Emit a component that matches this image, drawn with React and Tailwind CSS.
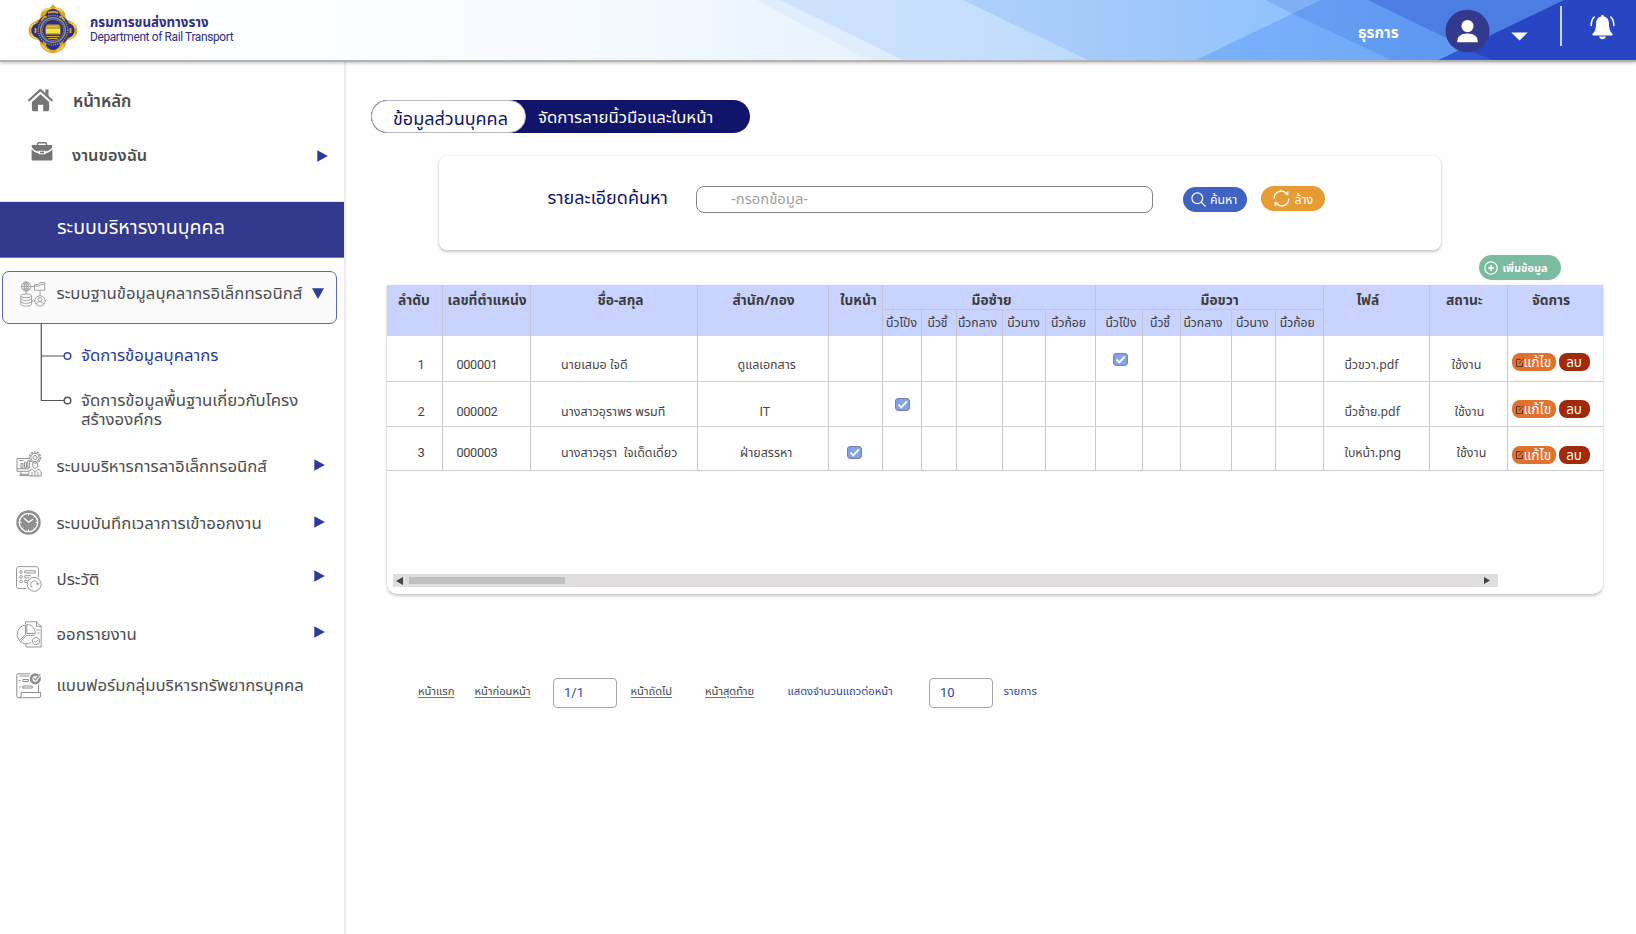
import React from "react";

function Logo() {
  const petals = [[25, 12.5], [25, 38.5], [11, 26.5], [39, 26.5]];
  return (
    <svg className="h-[50px] w-[50px] shrink-0" viewBox="0 0 50 50">
      <path d="M25 0.3l3.300 3.500c6 .2 9.800 4 9.200 9.700 1.200 1.800 2.600 2.700 4.500 3.500 4.500 1.800 7.300 4.800 7.400 9.500.1 5-3.500 8.500-8.200 9-2 .6-3 1.800-3.400 4-.9 5.300-5.300 8.300-12.800 9.800-7.500-1.500-11.900-4.500-12.800-9.800-.4-2.200-1.400-3.400-3.400-4C4.100 35 .5 31.500.6 26.500.7 21.800 3.500 18.800 8 17c1.900-.8 3.300-1.700 4.500-3.500C11.900 7.800 15.700 4 21.700 3.800z" fill="#dca52c" />
      <path d="M15 7.500q4-3.500 8-2.800M27 4.700q4-.7 8 2.800M2.500 24q1.500-4 5-5M47.500 24q-1.500-4-5-5M3 30q1.500 4 5.500 4M47 30q-1.500 4-5.500 4M14.500 41q2 4.500 7 5.500M35.500 41q-2 4.500-7 5.500" fill="none" stroke="#f8d75c" strokeWidth="1.300" />
      {petals.map(([x, y]) => (
        <circle key={x + "-" + y} cx={x} cy={y} r="7.600" fill="#2d3088" />
      ))}
      <circle cx="25" cy="26" r="17" fill="#2d3088" />
      <path d="M13.500 16.500l3-4 2 1M36.500 16.500l-3-4-2 1M7.500 24v5M42.500 24v5M15 38l3 3M35 38l-3 3M20 8.800q5-2 10 0" fill="none" stroke="#dca52c" strokeWidth="1.800" />
      <circle cx="25" cy="26" r="14.700" fill="none" stroke="#a98a52" strokeWidth="1.600" strokeDasharray="1.200 1" />
      <circle cx="25" cy="26" r="12.300" fill="#2d3088" stroke="#6f9d9c" strokeWidth="1.500" />
      <circle cx="25" cy="26" r="10.500" fill="none" stroke="#d9803a" strokeWidth="1" strokeDasharray="1.500 .6" />
      <path d="M19 20.500h12l1.500 2.500v7.500H17.500V23z" fill="#c8a531" />
      <path d="M18 25h14v4H18z" fill="#f1e840" />
      <path d="M19.500 22.500h11M18.500 32.500h13M20.500 34.500h9" stroke="#e6bd3d" strokeWidth=".9" />
    </svg>
  );
}

function HomeIcon() {
  return (
    <svg className="h-[24px] w-[25px]" viewBox="0 0 25 24" fill="#757575">
      <path d="M12.500 6.200l8.600 7.700v7.600c0 1-.7 1.700-1.700 1.700h-4.200v-6.400H10v6.400H5.600c-1 0-1.700-.7-1.700-1.700v-7.600z" />
      <path d="M1.200 12.300L12.300 2l11.400 10.300" fill="none" stroke="#757575" strokeWidth="2.200" strokeLinecap="round" strokeLinejoin="round" />
      <path d="M17.300 1.500h3.200v6.700l-3.200-2.900z" />
    </svg>
  );
}

function BriefcaseIcon() {
  return (
    <svg className="h-[19px] w-[22px]" viewBox="0 0 22 19" fill="#757575">
      <path d="M6.500 3.200V1.800Q6.500.7 7.600.7h6.800q1.100 0 1.100 1.100v1.400" fill="none" stroke="#757575" strokeWidth="1.400" />
      <path d="M.8 3h20.400v2.200c-1.700 2.600-4 3.900-6.700 4.300v-.8H7.600v.8C4.800 9.100 2.500 7.800.8 5.200z" />
      <path d="M.6 7.200c1.900 2.200 4.200 3.500 7 4v1h6.900v-1c2.800-.5 5.100-1.800 6.900-4v10c0 .8-.5 1.300-1.300 1.300H1.900c-.8 0-1.300-.5-1.300-1.300z" />
      <rect x="9" y="9.600" width="4" height="1.600" />
    </svg>
  );
}

function NetworkIcon() {
  return (
    <svg className="h-[26px] w-[26px]" viewBox="0 0 26 26" fill="none" stroke="#9a9a9a" strokeWidth=".9">
      <circle cx="6.200" cy="5.500" r="4.600" />
      <ellipse cx="6.200" cy="5.500" rx="2" ry="4.600" />
      <path d="M1.600 5.500h9.200M6.200.9v9.200M2.500 3h7.400M2.500 8h7.400M11 5.500h3M6.200 10v3M20 9.500v5.300M12 20h3" />
      <path d="M14.500 9.200V3.500h4l1.300-2h5v7.700zM14.500 5h5l1-1.500h4.200" />
      <ellipse cx="6.200" cy="14.800" rx="5.400" ry="1.900" />
      <path d="M.8 14.800v8.400c0 1 2.400 1.900 5.400 1.900s5.400-.9 5.400-1.900v-8.400M.8 17.600c0 1 2.400 1.900 5.400 1.900s5.400-.9 5.400-1.900M.8 20.400c0 1 2.400 1.900 5.400 1.900s5.400-.9 5.400-1.900" />
      <circle cx="20" cy="20" r="5.200" />
      <circle cx="20" cy="18.600" r="2" />
      <path d="M16.300 23.500c.4-1.900 1.800-2.900 3.700-2.900s3.300 1 3.700 2.900" />
    </svg>
  );
}

function LeaveIcon() {
  return (
    <svg className="h-[26px] w-[26px]" viewBox="0 0 26 26" fill="none" stroke="#949494" strokeWidth="1">
      <path d="M14 7.500H1v12.800h12M1 17.800h12M5 20.500v3M3.500 24.500h9M3.500 23.300h9" />
      <path d="M3.500 9.500h4M5 12.500v4.300h2v-4.300zM8.500 11.300v5.500h2v-5.500zM11.800 9.700v7h1.800V9.700z" />
      <circle cx="19" cy="6.500" r="5.500" strokeDasharray="2 1" strokeWidth="1.500" />
      <circle cx="19" cy="6.500" r="4.200" />
      <circle cx="19" cy="6.500" r="2" />
      <path d="M16.800 12.200v2.500c0 1.600 1 2.600 2.300 2.600s2.300-1 2.300-2.600v-2.500" />
      <path d="M12.800 25v-3.500c0-1.800 1.400-2.700 3.700-3.200l2.600 3 2.600-3c2.300.5 3.500 1.400 3.500 3.200V25zM16 21v4M22 21v4M19.100 21.500V25" />
    </svg>
  );
}

function ClockIcon() {
  return (
    <svg className="h-[25px] w-[25px]" viewBox="0 0 25 25">
      <circle cx="12.500" cy="12.500" r="12.200" fill="#8f8f8f" />
      <circle cx="12.500" cy="12.500" r="9.200" fill="#8f8f8f" stroke="#fff" strokeWidth="1.300" />
      <path d="M12.500 3.500v2M12.500 19.500v2M3.500 12.500h2M19.500 12.500h2M6.200 6.200l1.200 1.200M18.800 6.200l-1.200 1.200M6.200 18.800l1.200-1.200M18.800 18.800l-1.200-1.200" stroke="#fff" strokeWidth="1" />
      <path d="M8 8.300l4.600 4 4.400-3" fill="none" stroke="#fff" strokeWidth="1.300" />
    </svg>
  );
}

function HistoryIcon() {
  return (
    <svg className="h-[26px] w-[26px]" viewBox="0 0 26 26" fill="none" stroke="#8f8f8f" strokeWidth=".9">
      <path d="M10.500 22.500H3c-1.500 0-2.500-1-2.500-2.500V3C.5 1.500 1.500.6 3 .6h17c1.500 0 2.500.9 2.500 2.400v8" />
      <circle cx="5" cy="6" r="1.300" />
      <circle cx="5" cy="10.800" r="1.300" />
      <circle cx="5" cy="15.500" r="1.300" />
      <path d="M8.800 4.800h10.400v2.200H8.800zM15 9.700H8.800v2.200h4.500M11.500 14.500H8.800v2h2.500" />
      <circle cx="18.200" cy="18.300" r="7" />
      <path d="M15 20.300c-1-2.500.6-5.300 3.200-5.300 2 0 3.300 1.300 3.500 3.300M20 17.500l1.800 1.500 1.400-2M15 20.300l1.500.9" />
    </svg>
  );
}

function ReportIcon() {
  return (
    <svg className="h-[27px] w-[26px]" viewBox="0 0 26 27" fill="none" stroke="#8f8f8f" strokeWidth=".9">
      <path d="M9.500 4A9.600 9.600 0 0 0 3.300 19.600L9.500 13.500z" />
      <path d="M10.800 3.500v9h8.500c0-5-3.500-9-8.500-9z" />
      <path d="M4.500 20.700A9.300 9.300 0 0 0 15 21.500M10.500 14.300l-6 6.400M10.500 14.300h8.300" />
      <path d="M9.500 3.300V.8h11l4.700 4.500V26H10v-3.300M20.500.8v4.500h4.700M20.500 9h3M21.500 12h2" />
      <circle cx="20" cy="20" r="3.600" />
      <path d="M18.300 20l1.300 1.300 2.300-2.400" />
    </svg>
  );
}

function FormIcon() {
  return (
    <svg className="h-[26px] w-[26px]" viewBox="0 0 26 26" fill="none" stroke="#8f8f8f" strokeWidth="1">
      <path d="M14 .8H2.200Q.8.800.8 2.200v20.600q0 1.900 2 1.900h20q1.800 0 1.800-1.700v-3.500H5.200v3.200q0 2-2.200 2M22.500 11.500v8M3.500 3h9.500" />
      <path d="M6.800 6.500h5.500v2H6.800zM6.800 13h9.500v2H6.800zM3 7.500h1.500M3 14h1.500" />
      <circle cx="19.300" cy="5.800" r="4.200" strokeWidth="2.800" />
      <path d="M17.300 6.200l1.900 1.600L25 1" stroke="#fff" strokeWidth="2.200" />
      <path d="M17.500 5.200l1.800 1.800 5-5.700" strokeWidth="1.200" />
    </svg>
  );
}

function Arrow() {
  return (
    <svg className="h-[12px] w-[11px]" viewBox="0 0 11 12">
      <path d="M.3.2L10.800 6 .3 11.800z" fill="#2b3a9b" />
    </svg>
  );
}

function Header() {
  return (
    <header className="relative z-10 flex h-[62px] border-b-2 border-[#b3b3b3] shadow-[0_1px_3px_rgba(0,0,0,0.25)]">
      <svg className="absolute inset-0 h-[60px] w-[1636px]" viewBox="0 0 1636 60" preserveAspectRatio="none">
        <defs>
          <linearGradient id="hbase" x1="0" x2="1636" gradientUnits="userSpaceOnUse">
            <stop offset="0" stopColor="#ffffff" />
            <stop offset=".2" stopColor="#fdfeff" />
            <stop offset=".35" stopColor="#f6faff" />
            <stop offset=".5" stopColor="#e9f4ff" />
            <stop offset=".56" stopColor="#e6f2fe" />
          </linearGradient>
          <linearGradient id="hpale" x1="780" x2="1090" gradientUnits="userSpaceOnUse">
            <stop offset="0" stopColor="#cfe2fd" />
            <stop offset=".6" stopColor="#c7dffd" />
            <stop offset="1" stopColor="#badafc" />
          </linearGradient>
          <linearGradient id="hsky" x1="963" x2="1300" gradientUnits="userSpaceOnUse">
            <stop offset="0" stopColor="#aed0fb" />
            <stop offset=".4" stopColor="#a5cafa" />
            <stop offset="1" stopColor="#90c2fd" />
          </linearGradient>
          <linearGradient id="hmid" x1="1196" x2="1500" gradientUnits="userSpaceOnUse">
            <stop offset="0" stopColor="#7ab1fa" />
            <stop offset="1" stopColor="#6ba5f6" />
          </linearGradient>
          <linearGradient id="hstrong" x1="1265" x2="1492" gradientUnits="userSpaceOnUse">
            <stop offset="0" stopColor="#679ff1" />
            <stop offset="1" stopColor="#5c96f2" />
          </linearGradient>
        </defs>
        <rect width="1636" height="60" fill="url(#hbase)" />
        <path d="M757 0H1636V60H868z" fill="#dfedfd" />
        <path d="M780 0H1636V60H903z" fill="url(#hpale)" />
        <path d="M963 0H1636V60H1088z" fill="url(#hsky)" />
        <path d="M1265 0H1321L1292 13.500z" fill="#7fb0f5" />
        <path d="M1321 0H1636V60H1196z" fill="url(#hmid)" />
        <path d="M1321 0H1636V60H1391L1292 13.500z" fill="url(#hstrong)" />
        <path d="M1368 0H1636V60H1492z" fill="#4b7de2" />
        <path d="M1564 0H1636V60H1439z" fill="#2845c4" />
        <path d="M1464 48L1492 60H1439z" fill="#3159d4" />
      </svg>
      <div className="relative flex w-full">
        <div className="ml-[28px] mt-[4px]"><Logo /></div>
        <div className="ml-[12px] mt-[14px] text-[#2b2f86]">
          <div className="h-[16px] text-[13.250px] font-bold leading-[17px] whitespace-nowrap">กรมการขนส่งทางราง</div>
          <div className="font-[Roboto] text-[11.900px] leading-[14px] tracking-[-0.35px] whitespace-nowrap">Department of Rail Transport</div>
        </div>
        <div className="ml-auto mt-[22px] w-[87px] text-[15.300px] font-bold leading-[21px] text-white">ธุรการ</div>
        <svg className="mt-[9px] h-[44px] w-[45px]" viewBox="0 0 46 44">
          <ellipse cx="23" cy="22" rx="22.500" ry="21.800" fill="#333a8e" />
          <ellipse cx="23" cy="17" rx="6.200" ry="6.200" fill="#fff" />
          <path d="M12.500 33.500c0-6 3.500-8.900 10.500-8.900s10.500 2.900 10.500 8.900z" fill="#fff" />
        </svg>
        <svg className="ml-[21px] mt-[32px] h-[9px] w-[17px]" viewBox="0 0 17 9"><path d="M.3.5h16.400L8.500 8.500z" fill="#fff" /></svg>
        <div className="ml-[32px] mt-[6px] h-[40px] w-[2px] bg-[#c9d4f8]" />
        <svg className="ml-[28px] mr-[21px] mt-[14px] h-[26px] w-[25px]" viewBox="0 0 25 26" fill="#fff">
          <path d="M12.500 1c.9 0 1.400.6 1.400 1.500 3.200.7 5 3.100 5 6.500 0 5 .8 8.200 3.300 10.600.9.900.5 2-.7 2h-18c-1.200 0-1.600-1.100-.7-2C5.300 17.200 6.100 14 6.100 9c0-3.400 1.800-5.800 5-6.500 0-.9.500-1.500 1.400-1.500zM9.200 22.500h6.600c-.3 1.700-1.500 2.800-3.300 2.800s-3-1.100-3.300-2.800z" />
          <path d="M4.200 3C2 5.200 1.200 8 1.200 11.500M20.800 3c2.200 2.200 3 5 3 8.500" fill="none" stroke="#fff" strokeWidth="1.600" strokeLinecap="round" />
        </svg>
      </div>
    </header>
  );
}

function MenuRow({ icon, label, arrow, className, textClass, arrowClass }) {
  return (
    <div className={"flex items-start pl-[16px] " + className}>
      <div className="w-[40.500px] shrink-0">{icon}</div>
      <div className={"w-[257.500px] shrink-0 text-[16.750px] leading-[24px] whitespace-nowrap " + textClass}>{label}</div>
      {arrow && <div className={arrowClass}><Arrow /></div>}
    </div>
  );
}

function Sidebar() {
  return (
    <aside className="flex w-[346px] shrink-0 flex-col border-r-2 border-[#ededed] text-[#4f4f4f]">
      <div className="mt-[26px] flex h-[54px] items-start pl-[28px]">
        <HomeIcon />
        <div className="ml-[20px] mt-[1px] text-[16.800px] font-semibold leading-[24px]">หน้าหลัก</div>
      </div>
      <div className="flex h-[59px] items-start pl-[31px]">
        <BriefcaseIcon />
        <div className="ml-[19px] mt-[1px] w-[245px] text-[16.400px] font-semibold leading-[24px]">งานของฉัน</div>
        <div className="mt-[7.500px]"><Arrow /></div>
      </div>
      <div className="h-[57px] w-[344px] border-b border-t border-b-[#6d72b8] border-t-[#e4e4ee] bg-[#333a8e] pl-[57px] pt-[11px] text-[19.600px] leading-[28px] text-white">
        ระบบบริหารงานบุคคล
      </div>
      <div className="ml-[2px] mt-[13px] flex h-[53px] w-[335px] items-start rounded-[7px] border border-[#5a68b5] bg-[#fbfbfc] pl-[17px] pt-[9px]">
        <NetworkIcon />
        <div className="ml-[10.500px] w-[255.500px] text-[16.750px] leading-[24px] whitespace-nowrap">ระบบฐานข้อมูลบุคลากรอิเล็กทรอนิกส์</div>
        <svg className="mt-[7px] h-[11px] w-[12px]" viewBox="0 0 12 11"><path d="M0 .2h12L6 10.900z" fill="#2b3f9e" /></svg>
      </div>
      <div className="flex h-[127px] pl-[40px]">
        <svg className="h-[84px] w-[32px] shrink-0" viewBox="0 0 32 84" fill="none" stroke="#555" strokeWidth="1.200">
          <path d="M1.300 0v76.500H24M1.300 32H24" />
          <circle cx="27.500" cy="32" r="3.300" stroke="#3548a8" strokeWidth="1.500" />
          <circle cx="27.500" cy="76.500" r="3.300" strokeWidth="1.500" />
        </svg>
        <div className="ml-[9px] pt-[19px] text-[16.800px] whitespace-nowrap">
          <div className="h-[47px] text-[16.700px] leading-[24px] text-[#2b3a9b]">จัดการข้อมูลบุคลากร</div>
          <div className="leading-[19px]">จัดการข้อมูลพื้นฐานเกี่ยวกับโครง</div>
          <div className="leading-[20px]">สร้างองค์กร</div>
        </div>
      </div>
      <MenuRow className="h-[59px]" icon={<LeaveIcon />} label="ระบบบริหารการลาอิเล็กทรอนิกส์" arrow textClass="mt-[3px]" arrowClass="mt-[7.500px]" />
      <MenuRow className="h-[56px]" icon={<ClockIcon />} label="ระบบบันทึกเวลาการเข้าออกงาน" arrow textClass="mt-[1px]" arrowClass="mt-[6px]" />
      <MenuRow className="h-[55px]" icon={<HistoryIcon />} label="ประวัติ" arrow textClass="mt-[1px]" arrowClass="mt-[4px]" />
      <MenuRow className="h-[52px]" icon={<ReportIcon />} label="ออกรายงาน" arrow textClass="mt-[1px]" arrowClass="mt-[5px]" />
      <MenuRow className="h-[52px]" icon={<FormIcon />} label="แบบฟอร์มกลุ่มบริหารทรัพยากรบุคคล" textClass="mt-0" />
    </aside>
  );
}

function SearchCard() {
  return (
    <div className="ml-[93px] mt-[23px] flex h-[94px] w-[1002px] items-start rounded-[8px] bg-white shadow-[0_2px_3px_rgba(0,0,0,0.2),0_0_2px_rgba(0,0,0,0.12)]">
      <div className="ml-[108.500px] mt-[29px] w-[148.500px] text-[18px] leading-[24px] text-[#11146b]">รายละเอียดค้นหา</div>
      <div className="mt-[30px] h-[27px] w-[457px] rounded-[8px] border border-[#858585] pl-[34px] text-[14.800px] leading-[23px] text-[#a0a0a0]">-กรอกข้อมูล-</div>
      <button className="ml-[30px] mt-[31px] flex h-[25px] w-[64px] items-center rounded-full bg-[#4063c3] pl-[8px] text-[12.300px] leading-[24px] text-white">
        <svg className="mr-[4px] h-[15px] w-[15px]" viewBox="0 0 15 15" fill="none" stroke="#fff" strokeWidth="1.200"><circle cx="6.300" cy="6.300" r="5.400" /><path d="M10.200 10.200l4.300 4.300" /></svg>
        ค้นหา
      </button>
      <button className="ml-[14px] mt-[30px] flex h-[25px] w-[64px] items-center rounded-full bg-[#e69b35] pl-[11.500px] text-[12.400px] leading-[24px] text-white">
        <svg className="mr-[5px] h-[17px] w-[17px]" viewBox="0 0 17 17" fill="none" stroke="#fff" strokeWidth="1.400"><path d="M1.200 8.500A7 7 0 0 1 13.500 3.600M15.800 8.500A7 7 0 0 1 3.500 13.400" /><path d="M15.300.8l.2 4.400-4-.9zM1.700 16.200l-.2-4.400 4 .9z" fill="#fff" stroke="none" /></svg>
        <span className="mt-[2px]">ล้าง</span>
      </button>
    </div>
  );
}

const fingers = [
  ["นิ้วโป้ง", ""], ["นิ้วชี้", "pr-[2px]"], ["นิ้วกลาง", "pr-[3px]"], ["นิ้วนาง", ""], ["นิ้วก้อย", "pr-[3px]"],
  ["นิ้วโป้ง", "pl-[5px]"], ["นิ้วชี้", "pr-[2px]"], ["นิ้วกลาง", "pr-[5px]"], ["นิ้วนาง", "pr-[2px]"], ["นิ้วก้อย", "pr-[4px]"],
];
const GRID = "grid grid-cols-[55px_88px_166.500px_131px_54px_39px_35px_46px_43px_50px_47px_38px_51px_44.500px_47.500px_106.500px_78px_96px]";

function HeadCell({ children, className = "" }) {
  return <div className={"row-span-2 pt-[3px] text-[13.800px] font-bold leading-[24px] whitespace-nowrap " + className}>{children}</div>;
}

const rows = [
  { id: "1", no: "000001", name: "นายเสมอ ใจดี", dept: "ดูแลเอกสาร", deptPad: "pl-[40px]", file: "นิ้วขวา.pdf", status: "ใช้งาน", statusPad: "pl-[21.500px]", checked: 10, checkClass: "ml-[17.500px] mt-[17px]", text: "pt-[17px]", btn: "pt-[17px]", h: "h-[45.500px]" },
  { id: "2", no: "000002", name: "นางสาวอุราพร พรมที", dept: "IT", deptPad: "pl-[62px]", file: "นิ้วซ้าย.pdf", status: "ใช้งาน", statusPad: "pl-[24.500px]", checked: 5, checkClass: "ml-[12px] mt-[16.500px]", text: "pt-[18.500px]", btn: "pt-[18.500px]", h: "h-[45px]" },
  { id: "3", no: "000003", name: "นางสาวอุรา\u00a0 ใจเด็ดเดี่ยว", dept: "ฝ่ายสรรหา", deptPad: "pl-[42.500px]", file: "ใบหน้า.png", status: "ใช้งาน", statusPad: "pl-[26.500px]", checked: 4, checkClass: "ml-[18px] mt-[19.500px]", text: "pt-[14.500px]", btn: "pt-[19px]", h: "h-[44.500px]" },
];

function Check({ className }) {
  return (
    <svg className={"h-[13px] w-[15px] " + className} viewBox="0 0 15 13">
      <rect x=".6" y=".6" width="13.800" height="11.800" rx="2.400" fill="#86a4ea" stroke="#6b7aa8" strokeWidth="1" />
      <path d="M3.500 6.500l2.700 2.800L12 3.300" fill="none" stroke="#fff" strokeWidth="1.900" />
    </svg>
  );
}

function Row({ r }) {
  const line = "border-l border-[#c9c9c9] ";
  const latin = "font-[Roboto,'Noto_Sans_Thai',sans-serif] ";
  const finger = [5, 6, 7, 8, 9, 10, 11, 12, 13, 14];
  return (
    <div className={GRID + " border-b border-[#cfcfcf] text-[12.500px] leading-[24px] text-[#4a4545] whitespace-nowrap " + r.h}>
      <div className={latin + "pl-[30.500px] text-[13px] " + r.text}>{r.id}</div>
      <div className={line + latin + "pl-[13.500px] text-[12.800px] tracking-[-0.400px] " + r.text}>{r.no}</div>
      <div className={line + "pl-[30px] " + r.text}>{r.name}</div>
      <div className={line + (r.dept === "IT" ? latin : "") + r.deptPad + " " + r.text}>{r.dept}</div>
      <div className={line}>{r.checked === 4 && <Check className={r.checkClass} />}</div>
      {finger.map((c) => (
        <div key={c} className={line}>{r.checked === c && <Check className={r.checkClass} />}</div>
      ))}
      <div className={line + "pl-[21px] text-[12.300px] " + r.text}>{r.file}</div>
      <div className={line + r.statusPad + " " + r.text}>{r.status}</div>
      <div className={line + "flex gap-[3px] pl-[3.500px] " + r.btn}>
        <button className="flex h-[18px] w-[44px] items-center rounded-[8px] bg-[#e1722e] pl-[4px] text-[13.800px] leading-[18px] text-white">
          <svg className="h-[9px] w-[8px] shrink-0" viewBox="0 0 8 9" fill="none" stroke="#5d3213" strokeWidth="1"><path d="M4.500 1.500h-4v7h6V5M3 5.500L7.500.8" /></svg>
          แก้ไข
        </button>
        <button className="h-[18px] w-[31px] rounded-[8px] bg-[#a22a0a] text-[13.400px] leading-[18px] text-white">ลบ</button>
      </div>
    </div>
  );
}

function Table() {
  return (
    <div className="ml-[41px] h-[309px] w-[1216px] rounded-b-[10px] bg-white shadow-[0_2px_3px_rgba(0,0,0,0.2),0_0_2px_rgba(0,0,0,0.08)]">
      <div className={GRID + " h-[51px] w-[1216px] grid-rows-[25px_26px] overflow-hidden bg-[#c8d3ff] text-[#3f3c3c]"}>
        <HeadCell className="pl-[11px]">ลำดับ</HeadCell>
        <HeadCell className="border-l border-[#c3c5d2] pl-[4.500px]">เลขที่ตำแหน่ง</HeadCell>
        <HeadCell className="border-l border-[#c3c5d2] pl-[66.500px]">ชื่อ-สกุล</HeadCell>
        <HeadCell className="border-l border-[#c3c5d2] pl-[35px]">สำนัก/กอง</HeadCell>
        <HeadCell className="border-l border-[#c3c5d2] pl-[11.500px]">ใบหน้า</HeadCell>
        <div className="col-span-5 border-b border-l border-[#c3c5d2] pl-[89px] pt-[3px] text-[13.800px] font-bold leading-[24px]">มือซ้าย</div>
        <div className="col-span-5 border-b border-l border-[#c3c5d2] pl-[105px] pt-[3px] text-[13.800px] font-bold leading-[24px]">มือขวา</div>
        <HeadCell className="border-l border-[#c3c5d2] pl-[33px]">ไฟล์</HeadCell>
        <HeadCell className="border-l border-[#c3c5d2] pl-[16px]">สถานะ</HeadCell>
        <HeadCell className="border-l border-[#c3c5d2] pl-[24px]">จัดการ</HeadCell>
        {fingers.map(([f, pad], i) => (
          <div key={i} className={"flex justify-center border-l border-[#c3c5d2] pt-[1px] text-[12.200px] leading-[24px] whitespace-nowrap " + pad}>{f}</div>
        ))}
      </div>
      {rows.map((r) => <Row key={r.id} r={r} />)}
      <div className="ml-[6px] mt-[103px] flex h-[13px] w-[1105px] items-center bg-[#e0dede] pl-[3px] pr-[8px]">
        <svg className="h-[8px] w-[7px]" viewBox="0 0 7 8"><path d="M7 0v8L0 4z" fill="#444" /></svg>
        <div className="ml-[6px] h-[7px] w-[156px] bg-[#c0c0c0]" />
        <svg className="ml-auto h-[7px] w-[6px]" viewBox="0 0 6 7"><path d="M0 0v7l6-3.500z" fill="#444" /></svg>
      </div>
    </div>
  );
}

function Pagination() {
  const link = "mt-[1px] whitespace-nowrap underline decoration-[#777] underline-offset-[2px] text-[#4a4a4a] ";
  const box = "h-[30px] w-[64px] rounded-[4px] border border-[#a6a6a6] pl-[10px] font-[Roboto] text-[13px] leading-[27px] text-[#2f46a8] ";
  return (
    <div className="ml-[72px] mt-[84px] flex h-[30px] text-[11.200px] leading-[24px]">
      <div className={link + "w-[56.500px]"}>หน้าแรก</div>
      <div className={link + "w-[78.500px]"}>หน้าก่อนหน้า</div>
      <div className={box}>1/1</div>
      <div className={link + "ml-[13.500px] w-[74.500px]"}>หน้าถัดไป</div>
      <div className={link + "w-[82.500px]"}>หน้าสุดท้าย</div>
      <div className="mt-[1px] w-[141.500px] whitespace-nowrap text-[#2f46a8]">แสดงจำนวนแถวต่อหน้า</div>
      <div className={box}>10</div>
      <div className="ml-[10.500px] mt-[1px] text-[#2f46a8]">รายการ</div>
    </div>
  );
}

export default function App() {
  return (
    <div className="flex h-[934px] w-[1636px] flex-col overflow-hidden bg-[#fefefe] font-['Noto_Sans','Noto_Sans_Thai',sans-serif]">
      <Header />
      <div className="flex min-h-0 flex-1">
        <Sidebar />
        <main className="min-w-0 flex-1">
          <div className="ml-[25px] mt-[38px] flex h-[33px] w-[379px] rounded-full bg-[#11146b]">
            <div className="w-[155px] rounded-full border border-[#b9b9c9] bg-white pl-[21px] text-[18px] leading-[35px] text-[#11146b] whitespace-nowrap">ข้อมูลส่วนบุคคล</div>
            <div className="ml-[12px] text-[16.750px] leading-[34px] text-white whitespace-nowrap">จัดการลายนิ้วมือและใบหน้า</div>
          </div>
          <SearchCard />
          <button className="ml-[1132.500px] mt-[5px] flex h-[25px] w-[82px] items-center rounded-full bg-[#7bbba1] pl-[5px] text-[10.900px] font-bold leading-[24px] text-white">
            <svg className="mr-[5px] h-[14px] w-[14px]" viewBox="0 0 14 14" fill="none" stroke="#fff" strokeWidth="1.200"><circle cx="7" cy="7" r="6.200" /><path d="M7 4v6M4 7h6" strokeWidth="1.600" /></svg>
            เพิ่มข้อมูล
          </button>
          <div className="h-[5px]" />
          <Table />
          <Pagination />
        </main>
      </div>
    </div>
  );
}
